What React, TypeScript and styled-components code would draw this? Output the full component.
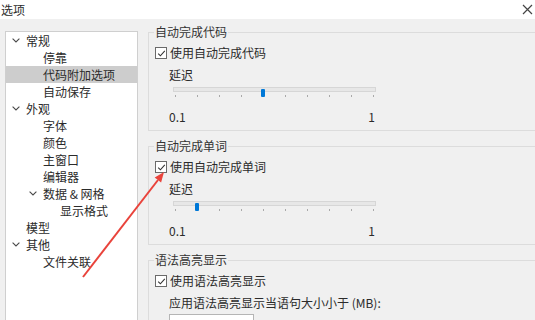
import React from "react";
import styled, { createGlobalStyle } from "styled-components";

const GlobalStyle = createGlobalStyle`
  html, body {
    margin: 0;
    padding: 0;
    overflow: hidden;
  }
  body {
    font-family: "Noto Sans CJK SC", "Noto Sans", sans-serif;
    font-size: 12px;
    color: #2b2b2b;
  }
`;

type TreeItem = {
  label: string;
  level: number;
  expanded?: boolean;
  selected?: boolean;
};

const treeItems: TreeItem[] = [
  { label: "常规", level: 0, expanded: true },
  { label: "停靠", level: 1 },
  { label: "代码附加选项", level: 1, selected: true },
  { label: "自动保存", level: 1 },
  { label: "外观", level: 0, expanded: true },
  { label: "字体", level: 1 },
  { label: "颜色", level: 1 },
  { label: "主窗口", level: 1 },
  { label: "编辑器", level: 1 },
  { label: "数据 & 网格", level: 1, expanded: true },
  { label: "显示格式", level: 2 },
  { label: "模型", level: 0 },
  { label: "其他", level: 0, expanded: true },
  { label: "文件关联", level: 1 },
];

const Chevron = () => (
  <svg width="8" height="5" viewBox="0 0 8 5">
    <path d="M0.6 0.6 L4 4 L7.4 0.6" fill="none" stroke="#4a4a4a" strokeWidth="1.1" />
  </svg>
);

const CheckMark = () => (
  <svg width="9" height="9" viewBox="0 0 9 9">
    <path d="M1.2 4.6 L3.4 6.8 L7.8 1.8" fill="none" stroke="#333" strokeWidth="1.1" />
  </svg>
);

const Checkbox: React.FC<{ label: string }> = ({ label }) => (
  <CheckRow>
    <Box>
      <CheckMark />
    </Box>
    <span>{label}</span>
  </CheckRow>
);

const DelaySlider: React.FC<{ value: number }> = ({ value }) => {
  const ratio = (value - 0.1) / 0.9;
  return (
    <>
      <SubLabel>延迟</SubLabel>
      <Slider>
        <Track />
        <Ticks>
          {Array.from({ length: 10 }).map((_, i) => (
            <Tick key={i} />
          ))}
        </Ticks>
        <Thumb style={{ left: 2 + ratio * 198 - 2 }} />
      </Slider>
      <ValueRow>
        <span>0.1</span>
        <span>1</span>
      </ValueRow>
    </>
  );
};

const App: React.FC = () => {
  return (
    <Window>
      <GlobalStyle />
      <TitleBar>
        <span>选项</span>
        <svg width="11" height="11" viewBox="0 0 11 11">
          <path d="M1 1 L10 10 M10 1 L1 10" stroke="#444" strokeWidth="1.2" />
        </svg>
      </TitleBar>
      <Body>
        <Tree>
          {treeItems.map((item) => (
            <TreeRow key={item.label} level={item.level} selected={item.selected}>
              <ChevronSlot>{item.expanded && <Chevron />}</ChevronSlot>
              <span>{item.label}</span>
            </TreeRow>
          ))}
        </Tree>
        <Options>
          <Group>
            <Legend>自动完成代码</Legend>
            <Checkbox label="使用自动完成代码" />
            <DelaySlider value={0.5} />
          </Group>
          <Group>
            <Legend>自动完成单词</Legend>
            <Checkbox label="使用自动完成单词" />
            <DelaySlider value={0.2} />
          </Group>
          <Group>
            <Legend>语法高亮显示</Legend>
            <Checkbox label="使用语法高亮显示" />
            <SubLabel>应用语法高亮显示当语句大小小于 (MB):</SubLabel>
            <SizeInput />
          </Group>
        </Options>
      </Body>
      <Arrow width="535" height="320" viewBox="0 0 535 320">
        <line x1="83" y1="277" x2="158" y2="180" stroke="#e9433b" strokeWidth="2" />
        <polygon points="164,172 161.1,182.4 154.7,177.5" fill="#e9433b" />
      </Arrow>
    </Window>
  );
};

const Window = styled.div`
  position: relative;
  width: 535px;
  height: 320px;
  overflow: hidden;
  background: #f0f0f0;
`;

const TitleBar = styled.div`
  display: flex;
  align-items: center;
  justify-content: space-between;
  height: 19px;
  padding: 0 2px 0 1px;
  background: #fff;
  line-height: 16px;
`;

const Body = styled.div`
  display: flex;
  gap: 10px;
  padding: 6px 0 0 5px;
`;

const Tree = styled.div`
  flex: none;
  box-sizing: border-box;
  width: 133px;
  height: 300px;
  margin-top: 6px;
  background: #fff;
  border: 1px solid #cfcfcf;
`;

const TreeRow = styled.div<{ level: number; selected?: boolean }>`
  display: flex;
  align-items: center;
  height: 17px;
  padding-left: ${(p) => 6 + p.level * 17}px;
  background: ${(p) => (p.selected ? "#cdcdcd" : "transparent")};
  line-height: 16px;
`;

const ChevronSlot = styled.span`
  display: flex;
  align-items: center;
  width: 14px;
  height: 17px;
`;

const Options = styled.div`
  flex: none;
  width: 420px;
`;

const Group = styled.fieldset`
  margin: 0 0 8px 0;
  padding: 0 6px 5px 6px;
  min-width: 0;
  border: 1px solid #dcdcdc;
`;

const Legend = styled.legend`
  padding: 0 1px;
  margin-left: -1px;
  line-height: 14px;
  color: #333;
`;

const CheckRow = styled.div`
  display: flex;
  align-items: center;
  gap: 3px;
  height: 16px;
  margin-top: 6px;
  line-height: 16px;
`;

const Box = styled.span`
  display: flex;
  align-items: center;
  justify-content: center;
  box-sizing: border-box;
  width: 12px;
  height: 12px;
  background: #fff;
  border: 1px solid #6a6a6a;
`;

const SubLabel = styled.div`
  height: 16px;
  margin: 6px 0 0 14px;
  line-height: 16px;
`;

const Slider = styled.div`
  position: relative;
  width: 203px;
  height: 14px;
  margin: 2px 0 0 18px;
`;

const Track = styled.div`
  box-sizing: border-box;
  height: 5px;
  margin-top: 4px;
  background: #e7e7e7;
  border: 1px solid #d6d6d6;
`;

const Ticks = styled.div`
  display: flex;
  justify-content: space-between;
  height: 2px;
  margin-top: 3px;
  padding: 0 2px;
`;

const Tick = styled.span`
  width: 1px;
  height: 2px;
  background: #a9a9a9;
`;

const Thumb = styled.span`
  position: absolute;
  top: 2px;
  width: 4px;
  height: 8px;
  border-radius: 1px;
  background: #0078d7;
`;

const ValueRow = styled.div`
  display: flex;
  justify-content: space-between;
  width: 206px;
  height: 16px;
  margin: 8px 0 0 14px;
  line-height: 16px;
`;

const SizeInput = styled.div`
  box-sizing: border-box;
  width: 85px;
  height: 20px;
  margin: 3px 0 0 14px;
  background: #fff;
  border: 1px solid #b5b5b5;
`;

const Arrow = styled.svg`
  position: absolute;
  left: 0;
  top: 0;
  pointer-events: none;
`;

export default App;
